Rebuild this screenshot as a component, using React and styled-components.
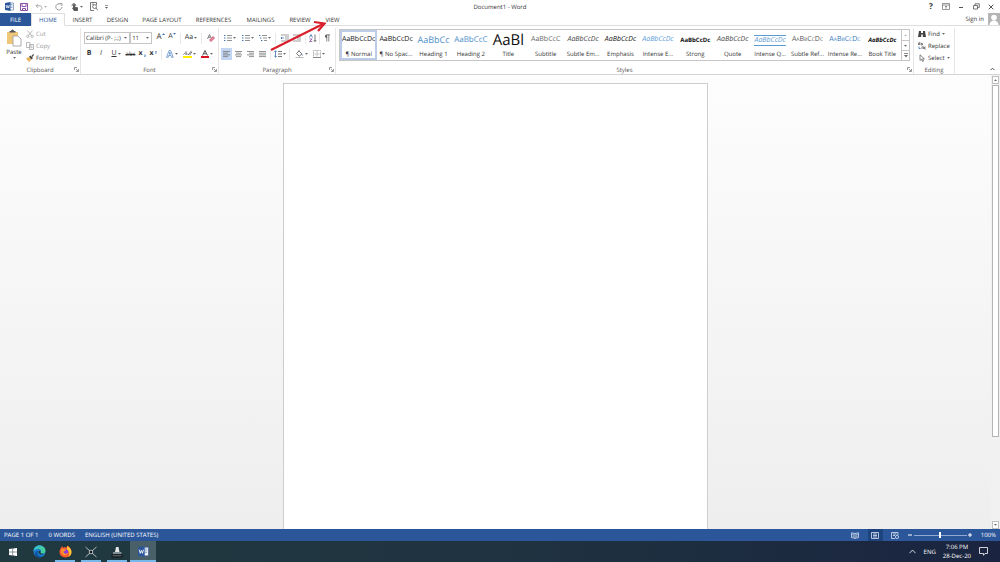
import React, { useState } from "react";
import styled, { createGlobalStyle, css } from "styled-components";

const GlobalStyle = createGlobalStyle`
  * {
    box-sizing: border-box;
  }
  body {
    margin: 0;
    font-family: "Open Sans", "Noto Sans", sans-serif;
    font-size: 6px;
    line-height: 8px;
    color: #333;
    background: #fff;
    text-rendering: geometricPrecision;
  }
  button, select, input {
    font: inherit;
    color: inherit;
    text-rendering: inherit;
    margin: 0;
    padding: 0;
    border: 0;
    border-radius: 0;
    background: transparent;
    appearance: none;
  }
  svg {
    display: block;
    flex: none;
  }
`;

const Window = styled.div`
  position: relative;
  display: flex;
  flex-direction: column;
  height: 100vh;
  overflow: hidden;
`;

/* title bar */
const TitleBar = styled.header`
  display: grid;
  grid-template-columns: 1fr auto 1fr;
  align-items: center;
  height: 13px;
  padding: 0 4px;
`;
const QuickAccess = styled.div`
  display: flex;
  align-items: center;
  gap: ${(p) => p.$gap || 0}px;
`;
const DocTitle = styled.h1`
  margin: 0;
  font-size: 6px;
  font-weight: 400;
`;
const WindowButtons = styled.div`
  display: flex;
  justify-content: flex-end;
  gap: 5px;
`;
const IconButton = styled.button`
  display: flex;
  align-items: center;
  justify-content: center;
  gap: 1px;
  flex: none;
  width: ${(p) => p.$w || 10}px;
  height: ${(p) => p.$h || 10}px;
  background: ${(p) => p.$on || "transparent"};
`;

/* tabs */
const TabRow = styled.nav`
  display: flex;
  height: 13px;
`;
const Tab = styled.button`
  width: ${(p) => p.$w}px;
  height: 13px;
  padding-top: 1px;
  white-space: nowrap;
  border-bottom: 1px solid #dedede;
  ${(p) =>
    p.$active &&
    css`
      padding-top: 0;
      color: #2b579a;
      border: 1px solid #dedede;
      border-bottom-color: #fff;
    `}
  ${(p) =>
    p.$file &&
    css`
      color: #fff;
      background: #2b579a;
      border-bottom-color: #2b579a;
    `}
`;
const SignIn = styled.div`
  display: flex;
  flex: 1;
  align-items: center;
  justify-content: flex-end;
  gap: 4px;
  border-bottom: 1px solid #dedede;
`;
const Link = styled.a`
  color: inherit;
  text-decoration: none;
`;

/* ribbon */
const Ribbon = styled.section`
  display: grid;
  grid-template-columns: 81px 138px 117px 1fr 41px 45px;
  height: 49px;
  border-bottom: 1px solid #d5d5d5;
`;
const Group = styled.div`
  display: flex;
  flex-direction: column;
  min-width: 0;
  margin: 2px 0 0;
  border-right: 1px solid #e6e6e6;
`;
const GroupBody = styled.div`
  display: flex;
  flex: 1;
  flex-direction: ${(p) => (p.$column ? "column" : "row")};
  gap: ${(p) => p.$gap || 0}px;
  min-width: 0;
  padding: ${(p) => p.$pad || "0"};
`;
const GroupFooter = styled.div`
  display: grid;
  grid-template-columns: 8px 1fr 8px;
  align-items: center;
  height: 9px;
  text-align: center;
  color: #555;
`;
const PasteButton = styled.button`
  display: flex;
  flex-direction: column;
  align-items: center;
  gap: 1px;
  width: 22px;
  height: 34px;
  padding-top: 1px;
`;
const Stack = styled.div`
  display: flex;
  flex-direction: column;
`;
const Command = styled.button`
  display: flex;
  align-items: center;
  gap: ${(p) => p.$gap || 2}px;
  height: 12px;
  white-space: nowrap;
  color: ${(p) => (p.disabled ? "#999" : "#333")};
`;
const Tools = styled.div`
  display: flex;
  align-items: center;
  height: 16px;
`;
const SelectBox = styled.label`
  display: flex;
  align-items: center;
  width: ${(p) => p.$w}px;
  height: 12px;
  margin-right: ${(p) => (p.$last ? 3 : 0)}px;
  padding: 0 2px 0 1px;
  border: 1px solid #c6c6c6;
  select {
    flex: 1;
    min-width: 0;
    height: 8px;
    outline: 0;
  }
`;
const Separator = styled.span`
  flex: none;
  width: 1px;
  height: 11px;
  margin: 0 2px;
  background: #e8e8e8;
`;
const Glyph = styled.span`
  font-size: ${(p) => p.$size || 7}px;
  font-weight: ${(p) => (p.$bold ? 700 : 400)};
  font-style: ${(p) => (p.$italic ? "italic" : "normal")};
  text-decoration: ${(p) => p.$line || "none"};
`;
const FontSizeButton = styled(IconButton)`
  align-items: flex-start;
  gap: 0;
`;

/* style gallery */
const Gallery = styled.div`
  display: flex;
  flex: 1;
  height: 32px;
  min-width: 0;
  border: 1px solid #c6c6c6;
`;
const GalleryItems = styled.div`
  display: grid;
  flex: 1;
  grid-template-columns: repeat(15, minmax(0, 1fr));
`;
const StyleItem = styled.button`
  display: flex;
  flex-direction: column;
  justify-content: flex-end;
  align-items: center;
  padding: 0 1px;
  white-space: nowrap;
  outline: ${(p) => (p.$active ? "2px solid #bccbe6" : "0")};
  outline-offset: -2px;
`;
const Sample = styled.span`
  display: flex;
  align-items: center;
  justify-content: center;
  min-width: 31px;
  height: ${(p) => (p.$boxed ? 11 : 18)}px;
  margin-bottom: ${(p) => (p.$boxed ? 4 : 1)}px;
  color: ${(p) => p.$color || "#111"};
  font-size: ${(p) => p.$size || 7}px;
  font-weight: ${(p) => (p.$bold ? 700 : 400)};
  font-style: ${(p) => (p.$italic ? "italic" : "normal")};
  font-variant: ${(p) => (p.$caps ? "small-caps" : "normal")};
  border: solid #5b9bd5;
  border-width: ${(p) => (p.$boxed ? "1px 0" : "0")};
`;
const StyleName = styled.span`
  height: 10px;
`;
const GalleryScroll = styled.div`
  display: grid;
  grid-template-rows: 1fr 1fr 1fr;
  width: 8px;
  border-left: 1px solid #c6c6c6;
  button {
    display: flex;
    align-items: center;
    justify-content: center;
  }
  button + button {
    border-top: 1px solid #c6c6c6;
  }
`;
const Collapse = styled.div`
  display: flex;
  align-items: flex-end;
  justify-content: flex-end;
  padding: 0 3px;
`;

/* document area */
const Workspace = styled.main`
  display: flex;
  flex: 1;
  min-height: 0;
  background: linear-gradient(#fdfdfd, #eeeeee);
`;
const Canvas = styled.div`
  display: flex;
  flex: 1;
  justify-content: center;
  padding-top: 8px;
`;
const Page = styled.article`
  width: 425px;
  background: #fff;
  border: 1px solid #cdcdcd;
  border-bottom: 0;
`;
const Scrollbar = styled.div`
  display: flex;
  flex-direction: column;
  width: 9px;
  padding: 1px 1px 0;
  gap: 1px;
  background: #f1f1f1;
`;
const ScrollButton = styled.button`
  display: flex;
  align-items: center;
  justify-content: center;
  height: 8px;
  background: #fff;
  border: 1px solid #c0c0c0;
`;
const Track = styled.div`
  flex: 1;
`;
const Thumb = styled.div`
  height: 81%;
  background: #fff;
  border: 1px solid #b4b4b4;
`;

/* status bar */
const StatusBar = styled.footer`
  display: flex;
  align-items: center;
  justify-content: space-between;
  height: 12px;
  padding: 0 4px;
  color: #fff;
  background: #2b579a;
`;
const StatusItems = styled.div`
  display: flex;
  align-items: center;
  gap: ${(p) => p.$gap}px;
`;
const ZoomSlider = styled.input`
  width: 53px;
  height: 12px;
  background: linear-gradient(#8fa9d0, #8fa9d0) center / 100% 1px no-repeat;
  &::-webkit-slider-thumb {
    appearance: none;
    width: 2px;
    height: 6px;
    background: #fff;
  }
`;

/* taskbar */
const Taskbar = styled.nav`
  display: flex;
  align-items: center;
  justify-content: space-between;
  height: 21px;
  color: #fff;
  background: linear-gradient(90deg, #20393f, #1f3340 50%, #1a2440);
`;
const TaskItems = styled.div`
  display: flex;
`;
const TaskButton = styled.button`
  display: flex;
  align-items: center;
  justify-content: center;
  width: 26px;
  height: 21px;
  background: ${(p) => (p.$active ? "#4a6069" : "transparent")};
  ${(p) =>
    p.$open &&
    css`
      background-image: linear-gradient(#76b9ed, #76b9ed);
      background-size: ${p.$active ? "100%" : "20px"} 2px;
      background-position: bottom;
      background-repeat: no-repeat;
    `}
`;
const Tray = styled.div`
  display: flex;
  align-items: center;
  gap: 7px;
  padding-right: 12px;
`;
const Clock = styled.time`
  text-align: center;
  line-height: 9px;
`;

const PointerArrow = styled.svg`
  position: absolute;
  left: 268px;
  top: 18px;
  pointer-events: none;
`;

const Icon = ({ w = 8, h = 8, children, ...rest }) => (
  <svg
    width={w}
    height={h}
    viewBox={`0 0 ${w} ${h}`}
    fill="none"
    stroke="#555"
    strokeWidth="0.8"
    {...rest}
  >
    {children}
  </svg>
);

const Caret = ({ up, color = "#666" }) => (
  <Icon w={3} h={2} stroke="none" fill={color}>
    <path d={up ? "M0 2L1.5 0.2L3 2z" : "M0 0L1.5 1.8L3 0z"} />
  </Icon>
);

const Launcher = () => (
  <IconButton $w={8} $h={8} aria-label="More options">
    <Icon w={5} h={5} strokeWidth="0.6">
      <path d="M0.5 3V0.5H3M2 2l2 2M4.5 2v2.5H2" />
    </Icon>
  </IconButton>
);

const WordIcon = ({ size = 9 }) => (
  <svg width={size} height={size} viewBox="0 0 18 18">
    <path d="M9 2h8v14H9z" fill="#fff" stroke="#2b579a" />
    <path d="M11 5h4M11 8h4M11 11h4" stroke="#2b579a" />
    <path d="M0 2L11 0V18L0 16z" fill="#2b579a" />
    <path d="M2 6l1.7 6L5.5 7l1.8 5L9 6" fill="none" stroke="#fff" strokeWidth="1.4" />
  </svg>
);

const Lines = ({ rows, color = "#777" }) => (
  <Icon stroke={color}>
    {rows.map(([a, b], i) => (
      <path key={i} d={`M${a} ${1.5 + i * 1.7}H${b}`} />
    ))}
  </Icon>
);

const ListIcon = ({ indent = 0 }) => (
  <Icon>
    <path d="M0 1.5h1.4" stroke="#3b6fb5" strokeWidth="1.2" />
    <path d={`M${indent} 4h1.4M${indent * 2} 6.5h1.4`} stroke="#3b6fb5" strokeWidth="1.2" />
    <path d={`M3 1.5h5M${3 + indent} 4H8M${3 + indent * 2} 6.5H8`} stroke="#777" />
  </Icon>
);

const IndentIcon = ({ right }) => (
  <Icon>
    <path d="M0 1h8M4 3h4M4 5h4M0 7h8" stroke="#777" strokeWidth="0.7" />
    <path d={right ? "M0 4h3M2 3l1 1-1 1" : "M0 4h3M1 3L0 4l1 1"} stroke="#3b6fb5" />
  </Icon>
);

const tabs = [
  { name: "FILE", w: 31 },
  { name: "HOME", w: 34 },
  { name: "INSERT", w: 35 },
  { name: "DESIGN", w: 35 },
  { name: "PAGE LAYOUT", w: 54 },
  { name: "REFERENCES", w: 49 },
  { name: "MAILINGS", w: 45 },
  { name: "REVIEW", w: 34 },
  { name: "VIEW", w: 31 },
];

const styles = [
  { name: "¶ Normal" },
  { name: "¶ No Spac..." },
  { name: "Heading 1", text: "AaBbCc", size: 9, color: "#4e8fcb" },
  { name: "Heading 2", text: "AaBbCcC", size: 8, color: "#4e8fcb" },
  { name: "Title", text: "AaBl", size: 15 },
  { name: "Subtitle", text: "AaBbCcC", color: "#666" },
  { name: "Subtle Em...", italic: true, color: "#444" },
  { name: "Emphasis", italic: true },
  { name: "Intense E...", italic: true, color: "#5b9bd5" },
  { name: "Strong", bold: true, size: 6 },
  { name: "Quote", italic: true, color: "#444" },
  { name: "Intense Q...", italic: true, boxed: true, color: "#5b9bd5" },
  { name: "Subtle Ref...", caps: true, color: "#555" },
  { name: "Intense Re...", caps: true, color: "#2f78c0" },
  { name: "Book Title", italic: true, bold: true, size: 6 },
];

const App = () => {
  const [tab, setTab] = useState("HOME");
  const [style, setStyle] = useState("¶ Normal");
  const [zoom, setZoom] = useState(100);

  return (
    <Window>
      <GlobalStyle />
      <TitleBar>
        <QuickAccess $gap={5}>
          <IconButton aria-label="Word">
            <WordIcon />
          </IconButton>
          <IconButton aria-label="Save">
            <Icon stroke="#8c4fa8" strokeWidth="1">
              <path d="M0.5 0.5h7v7h-7zM2 0.5V3.5H6V0.5M2.5 7.5V5.5H5.5V7.5" />
            </Icon>
          </IconButton>
          <IconButton $w={14} aria-label="Undo">
            <Icon stroke="#aaa" strokeWidth="1">
              <path d="M3 0.8L1 2.8L3 4.8M1 2.8H5C7.5 2.8 7.5 6.8 5 7" />
            </Icon>
            <Caret color="#aaa" />
          </IconButton>
          <IconButton $w={12} aria-label="Repeat">
            <Icon stroke="#999" strokeWidth="1">
              <path d="M5.5 1.2A3.1 3.1 0 1 0 7 4M4.5 0.5H7V3" />
            </Icon>
          </IconButton>
          <IconButton $w={14} aria-label="Touch mode">
            <Icon stroke="#555" strokeWidth="0.9">
              <path d="M1.2 3A1.8 1.8 0 1 1 4.6 3" />
              <path d="M2.5 1.6h1V4l3 0.7V7.5H3L1.6 5l0.9 0.2z" fill="#555" />
            </Icon>
            <Caret />
          </IconButton>
          <IconButton aria-label="Print preview">
            <Icon h={9}>
              <path d="M6.5 3V0.5H0.5v8H4" />
              <circle cx="4.6" cy="4.6" r="1.9" />
              <path d="M6 6l2 2.4M2 2.2h2" />
            </Icon>
          </IconButton>
          <IconButton $w={4} aria-label="Customize">
            <Icon w={3} h={4} strokeWidth="0.6">
              <path d="M0 0.5h3" />
              <path d="M0 2h3L1.5 3.8z" fill="#555" stroke="none" />
            </Icon>
          </IconButton>
        </QuickAccess>
        <DocTitle>Document1 - Word</DocTitle>
        <WindowButtons>
          <IconButton aria-label="Help">
            <Glyph $size={8} $bold>?</Glyph>
          </IconButton>
          <IconButton aria-label="Ribbon display">
            <Icon h={7}>
              <path d="M0.5 0.5h7v6h-7zM0.5 2h7M4 5.8V3M3 4l1-1 1 1" strokeWidth="0.6" />
            </Icon>
          </IconButton>
          <IconButton aria-label="Minimize">
            <Icon w={6} strokeWidth="1">
              <path d="M1 4.5h4" />
            </Icon>
          </IconButton>
          <IconButton aria-label="Restore">
            <Icon w={7} h={7}>
              <path d="M0.5 2.5h4v3.5h-4zM2 2.5V0.8H6.3V4.4H4.5" />
            </Icon>
          </IconButton>
          <IconButton aria-label="Close">
            <Icon w={6} h={6} strokeWidth="1">
              <path d="M0.7 0.7l4.6 4.6M5.3 0.7L0.7 5.3" />
            </Icon>
          </IconButton>
        </WindowButtons>
      </TitleBar>

      <TabRow>
        {tabs.map((t) => (
          <Tab
            key={t.name}
            $w={t.w}
            $file={t.name === "FILE"}
            $active={t.name === tab}
            onClick={() => setTab(t.name)}
          >
            {t.name}
          </Tab>
        ))}
        <SignIn>
          <Link href="#">Sign in</Link>
          <svg width="12" height="12" viewBox="0 0 12 12">
            <path d="M0 0h12v12H0z" fill="#b5b5b5" />
            <circle cx="6" cy="4.6" r="2.8" fill="#fff" />
            <path d="M1.5 12c0-6 9-6 9 0z" fill="#fff" />
          </svg>
        </SignIn>
      </TabRow>

      <Ribbon>
        <Group>
          <GroupBody $pad="0 0 0 3px" $gap={1}>
            <PasteButton>
              <svg width="16" height="18" viewBox="0 0 16 18">
                <path d="M1 3h11v12H1z" fill="#eec878" />
                <path d="M3.5 3.5V2H5a1.5 1.5 0 0 1 3 0h1.5v1.5z" fill="#555" />
                <path d="M7 7h5l3 3v7H7z" fill="#fff" stroke="#999" strokeWidth="0.8" />
              </svg>
              <span>Paste</span>
              <Caret />
            </PasteButton>
            <Stack>
              <Command disabled>
                <Icon stroke="#aaa">
                  <path d="M1.5 0.5L5.5 5.5M6.5 0.5L2.5 5.5" />
                  <circle cx="1.8" cy="6.3" r="1.2" />
                  <circle cx="6.2" cy="6.3" r="1.2" />
                </Icon>
                Cut
              </Command>
              <Command disabled>
                <Icon stroke="#aaa">
                  <path d="M0.5 0.5h3.5v5h-3.5zM3.5 2.5h4v5h-4zM4.5 4h2M4.5 5.7h2" />
                </Icon>
                Copy
              </Command>
              <Command>
                <Icon stroke="none">
                  <path d="M0 4.5L3 3l2.5 2.5L3 8z" fill="#e8b35a" />
                  <path d="M3 2.8L4.4 1.5 7 4 5.6 5.4zM5.5 2L7.3 0 8 0.8 6.5 3z" fill="#444" />
                </Icon>
                Format Painter
              </Command>
            </Stack>
          </GroupBody>
          <GroupFooter>
            <span />
            <span>Clipboard</span>
            <Launcher />
          </GroupFooter>
        </Group>

        <Group>
          <GroupBody $column $pad="2px 0 0 3px">
            <Tools>
              <SelectBox $w={49}>
                <select aria-label="Font">
                  <option>Calibri (P- ;.;)</option>
                </select>
                <Caret />
              </SelectBox>
              <SelectBox $w={23} $last>
                <select aria-label="Font size">
                  <option>11</option>
                </select>
                <Caret />
              </SelectBox>
              <FontSizeButton $w={11} aria-label="Grow font">
                <Glyph $size={8}>A</Glyph>
                <Caret up color="#3b6fb5" />
              </FontSizeButton>
              <FontSizeButton $w={12} aria-label="Shrink font">
                <Glyph>A</Glyph>
                <Caret color="#3b6fb5" />
              </FontSizeButton>
              <Separator />
              <IconButton $w={16} aria-label="Change case">
                <Glyph>Aa</Glyph>
                <Caret />
              </IconButton>
              <Separator />
              <IconButton $w={14} aria-label="Clear formatting">
                <Icon stroke="#666">
                  <path d="M0.5 5L2.5 0.5 4 4M1.2 3.3h2" />
                  <path d="M2.5 6L6 2.5 7.5 4 4 7.5z" fill="#e58a9c" stroke="#c0506a" />
                </Icon>
              </IconButton>
            </Tools>
            <Tools>
              <IconButton aria-label="Bold">
                <Glyph $bold>B</Glyph>
              </IconButton>
              <IconButton $w={14} aria-label="Italic">
                <Glyph $italic>I</Glyph>
              </IconButton>
              <IconButton $w={16} aria-label="Underline">
                <Glyph $line="underline">U</Glyph>
                <Caret />
              </IconButton>
              <IconButton $w={13} aria-label="Strikethrough">
                <Glyph $size={6} $line="line-through">abc</Glyph>
              </IconButton>
              <IconButton aria-label="Subscript">
                <Glyph $bold>x</Glyph>
                <Icon w={2} h={6} strokeWidth="0.6" stroke="#3b6fb5">
                  <path d="M0 4h1.6L0.2 5.7h1.6" />
                </Icon>
              </IconButton>
              <IconButton $w={12} aria-label="Superscript">
                <Glyph $bold>x</Glyph>
                <Icon w={2} h={6} strokeWidth="0.6" stroke="#3b6fb5">
                  <path d="M0 0.5h1.6L0.2 2.2h1.6" />
                </Icon>
              </IconButton>
              <Separator />
              <IconButton $w={16} aria-label="Text effects">
                <Icon stroke="#4a80c4">
                  <path d="M0.6 7.3L3 0.6h1.6L7.2 7.3H5.5L5 5.5H2.7L2.2 7.3zM3.2 4.2h1.3L3.8 2.2z" strokeWidth="0.7" />
                </Icon>
                <Caret />
              </IconButton>
              <IconButton $w={18} aria-label="Highlight colour">
                <Icon w={9}>
                  <path d="M0 6h9v2H0z" fill="#ffee00" stroke="none" />
                  <path d="M0.5 4.5L2 2.8M3 5V1.2M3 4h1.6M5 5l3.5-4.2M6.5 5.2L8.8 2" />
                </Icon>
                <Caret />
              </IconButton>
              <IconButton $w={18} aria-label="Font colour">
                <Icon>
                  <path d="M0 6h8v2H0z" fill="#d9121f" stroke="none" />
                  <path d="M1.5 5.5L4 0.5 6.5 5.5M2.5 3.8h3" strokeWidth="1" />
                </Icon>
                <Caret />
              </IconButton>
            </Tools>
          </GroupBody>
          <GroupFooter>
            <span />
            <span>Font</span>
            <Launcher />
          </GroupFooter>
        </Group>

        <Group>
          <GroupBody $column $pad="2px 0 0 2px">
            <Tools>
              <IconButton $w={18} aria-label="Bullets">
                <ListIcon />
                <Caret />
              </IconButton>
              <IconButton $w={18} aria-label="Numbering">
                <ListIcon />
                <Caret />
              </IconButton>
              <IconButton $w={16} aria-label="Multilevel list">
                <ListIcon indent={1} />
                <Caret />
              </IconButton>
              <Separator />
              <IconButton $w={13} aria-label="Decrease indent">
                <IndentIcon />
              </IconButton>
              <IconButton $w={12} aria-label="Increase indent">
                <IndentIcon right />
              </IconButton>
              <Separator />
              <IconButton $w={9} aria-label="Sort">
                <Icon>
                  <path d="M0.5 3.5L2 0.5l1.5 3" stroke="#3b6fb5" />
                  <path d="M0.5 5h2.6L0.5 7.5h2.8" stroke="#8c4fa8" />
                  <path d="M6 0.5v7M4.8 6L6 7.5 7.2 6" />
                </Icon>
              </IconButton>
              <Separator />
              <IconButton aria-label="Show marks">
                <Icon>
                  <path d="M3.8 7.5V0.8H7M5.8 7.5V0.8" strokeWidth="0.7" />
                  <path d="M3.8 0.5a1.7 1.7 0 0 0 0 3.6z" fill="#555" stroke="none" />
                </Icon>
              </IconButton>
            </Tools>
            <Tools>
              <IconButton $on="#c2d5f2" $w={11} $h={12} aria-label="Align left">
                <Lines rows={[[0, 7], [0, 5], [0, 7], [0, 5]]} />
              </IconButton>
              <IconButton $w={12} aria-label="Center">
                <Lines rows={[[1, 8], [2, 7], [1, 8], [2, 7]]} />
              </IconButton>
              <IconButton $w={12} aria-label="Align right">
                <Lines rows={[[1, 8], [3, 8], [1, 8], [3, 8]]} />
              </IconButton>
              <IconButton $w={12} aria-label="Justify">
                <Lines rows={[[1, 8], [1, 8], [1, 8], [1, 8]]} />
              </IconButton>
              <Separator />
              <IconButton $w={14} aria-label="Line spacing">
                <Icon>
                  <path d="M1.5 0.8v6.4M0.3 2L1.5 0.8 2.7 2M0.3 6L1.5 7.2 2.7 6" stroke="#3b6fb5" />
                  <path d="M4 1.5h4M4 4h4M4 6.5h4" />
                </Icon>
                <Caret />
              </IconButton>
              <Separator />
              <IconButton $w={18} aria-label="Shading">
                <Icon w={9}>
                  <path d="M1.5 3.5L4 1l3 3-2.8 2.2zM4 1V0.2" />
                  <path d="M7.2 4c1 1.2 1 2 0.3 2z" fill="#3b6fb5" stroke="none" />
                  <path d="M0.5 7.5h8" stroke="#aaa" />
                </Icon>
                <Caret />
              </IconButton>
              <IconButton $w={18} aria-label="Borders">
                <Icon stroke="#999">
                  <path d="M0.5 0.5h7v7h-7zM4 0.5v7M0.5 4h7" strokeDasharray="1 0.6" />
                  <path d="M0 7.5h8" stroke="#777" />
                </Icon>
                <Caret />
              </IconButton>
            </Tools>
          </GroupBody>
          <GroupFooter>
            <span />
            <span>Paragraph</span>
            <Launcher />
          </GroupFooter>
        </Group>

        <Group>
          <GroupBody $pad="1px 3px 0">
            <Gallery>
              <GalleryItems>
                {styles.map((s) => (
                  <StyleItem
                    key={s.name}
                    $active={s.name === style}
                    onClick={() => setStyle(s.name)}
                  >
                    <Sample
                      $size={s.size}
                      $color={s.color}
                      $italic={s.italic}
                      $bold={s.bold}
                      $caps={s.caps}
                      $boxed={s.boxed}
                    >
                      {s.text || "AaBbCcDc"}
                    </Sample>
                    <StyleName>{s.name}</StyleName>
                  </StyleItem>
                ))}
              </GalleryItems>
              <GalleryScroll>
                <button aria-label="Previous row">
                  <Caret up color="#bbb" />
                </button>
                <button aria-label="Next row">
                  <Caret />
                </button>
                <button aria-label="All styles">
                  <Icon w={4} h={5} strokeWidth="0.7">
                    <path d="M0 0.5h4" />
                    <path d="M0 2h4L2 4.4z" fill="#666" stroke="none" />
                  </Icon>
                </button>
              </GalleryScroll>
            </Gallery>
          </GroupBody>
          <GroupFooter>
            <span />
            <span>Styles</span>
            <Launcher />
          </GroupFooter>
        </Group>

        <Group>
          <GroupBody $column $pad="0 0 0 4px">
            <Command>
              <Icon stroke="none" fill="#444">
                <path d="M1 1h2v2H5V1h2l1 6H4.8V4.5H3.2V7H0z" />
              </Icon>
              <span>Find</span>
              <Caret />
            </Command>
            <Command>
              <Icon>
                <path d="M0.5 3V1l1-0.6V3M3 0.5V3h1.5V1.6H3M4 7V4.8h1.5V7M7.8 5H6.5v2h1.3" strokeWidth="0.7" />
                <path d="M1 4.5v2h1.6" stroke="#3b6fb5" />
              </Icon>
              <span>Replace</span>
            </Command>
            <Command>
              <Icon>
                <path d="M2 0.8v5.6l1.5-1.2L4.6 7.6 5.5 7 4.6 4.8H6.4z" strokeWidth="0.7" />
              </Icon>
              <span>Select</span>
              <Caret />
            </Command>
          </GroupBody>
          <GroupFooter>
            <span />
            <span>Editing</span>
          </GroupFooter>
        </Group>

        <Collapse>
          <IconButton aria-label="Collapse ribbon">
            <Icon w={5} h={4} strokeWidth="1">
              <path d="M0.5 3.2L2.5 1.2L4.5 3.2" />
            </Icon>
          </IconButton>
        </Collapse>
      </Ribbon>

      <Workspace>
        <Canvas>
          <Page />
        </Canvas>
        <Scrollbar>
          <ScrollButton aria-label="Scroll up">
            <Caret up />
          </ScrollButton>
          <Track>
            <Thumb />
          </Track>
          <ScrollButton aria-label="Scroll down">
            <Caret />
          </ScrollButton>
        </Scrollbar>
      </Workspace>

      <StatusBar>
        <StatusItems $gap={10}>
          <span>PAGE 1 OF 1</span>
          <span>0 WORDS</span>
          <span>ENGLISH (UNITED STATES)</span>
        </StatusItems>
        <StatusItems $gap={8}>
          <StatusItems $gap={5}>
            <IconButton $w={15} $h={12} aria-label="Read mode">
              <Icon h={7} stroke="#dbe5f3">
                <path d="M0.5 0.8L4 1.5 7.5 0.8V5.5L4 6.3 0.5 5.5zM4 1.5v4.8M1.5 2.5l1.5 0.3M1.5 4l1.5 0.3M5 2.8l1.5-0.3M5 4.3L6.5 4" />
              </Icon>
            </IconButton>
            <IconButton $w={15} $h={12} $on="#1e4480" aria-label="Print layout">
              <Icon h={7} stroke="#dbe5f3">
                <path d="M0.5 0.5h7v6h-7zM2 2h4M2 3.5h4M2 5h4" />
              </Icon>
            </IconButton>
            <IconButton $w={15} $h={12} aria-label="Web layout">
              <Icon h={7} stroke="#dbe5f3">
                <path d="M7 3V0.5H0.5v6H4M2 2h3.5M2 3.5h2" />
                <circle cx="6" cy="5" r="1.6" />
              </Icon>
            </IconButton>
            <StatusItems $gap={1}>
              <IconButton $w={5} aria-label="Zoom out">
                <Icon w={4} h={4} stroke="#fff" strokeWidth="1">
                  <path d="M0 2h4" />
                </Icon>
              </IconButton>
              <ZoomSlider
                type="range"
                min="0"
                max="200"
                aria-label="Zoom"
                value={zoom}
                onChange={(e) => setZoom(Number(e.target.value))}
              />
              <IconButton $w={5} aria-label="Zoom in">
                <Icon w={4} h={4} stroke="#fff" strokeWidth="1">
                  <path d="M0 2h4M2 0v4" />
                </Icon>
              </IconButton>
            </StatusItems>
          </StatusItems>
          <span>{zoom}%</span>
        </StatusItems>
      </StatusBar>

      <Taskbar>
        <TaskItems>
          <TaskButton aria-label="Start">
            <Icon stroke="none" fill="#fff">
              <path d="M0 1.1L3.6 0.6V3.8H0zM4.1 0.5L8 0V3.8H4.1zM0 4.3H3.6V7.4L0 6.9zM4.1 4.3H8V8L4.1 7.5z" />
            </Icon>
          </TaskButton>
          <TaskButton aria-label="Edge">
            <svg width="13" height="13" viewBox="0 0 24 24">
              <circle cx="12" cy="12" r="11" fill="#1b7fd0" />
              <path d="M1 11C2 4 7 1 12 1c7 0 11 5 11 9 0 4-3 6-6 6-3 0-4-1-3-2 3-4-1-7-4-7-4 0-8 2-9 4z" fill="#45cfa0" />
              <path d="M1 11C2 4 7 1 12 1c3 0 5 1 7 3-6-2-14 1-18 7z" fill="#35b8d8" />
              <path d="M9 11c-3 5 1 11 8 10-4 3-11 2-13-3-1-4 1-7 5-7z" fill="#0f4f9e" />
              <path d="M10 13c0-3 4-3 4 0 -1 2 1 4 6 3-3 3-10 2-10-3z" fill="#20393f" />
            </svg>
          </TaskButton>
          <TaskButton $open aria-label="Firefox">
            <svg width="13" height="13" viewBox="0 0 24 24">
              <path d="M4 5l1-3 3 3c2-1 4-1 6 0l2-4c5 3 7 8 7 12 0 6-5 10-11 10S1 19 1 13c0-3 1-6 3-8z" fill="#ff5a2c" />
              <path d="M15 2c5 3 8 7 8 11 0 5-3 8-6 9 3-4 3-10-2-13z" fill="#ffc933" />
              <circle cx="12" cy="13" r="5" fill="#8a3be0" />
              <path d="M4 8c3-2 6-1 9 1-2 1-3 3-5 3 1 5 7 5 9 2-1 6-11 7-13 0z" fill="#ff9426" />
            </svg>
          </TaskButton>
          <TaskButton $open aria-label="Utility">
            <Icon w={12} h={12} stroke="#d8dcdd">
              <path d="M0.5 1L5 5M11.5 1L7 5M0.5 11L5 7M11.5 11L7 7" />
              <circle cx="6" cy="6" r="1.8" fill="#111" />
            </Icon>
          </TaskButton>
          <TaskButton $open aria-label="Disk tool">
            <Icon w={12} h={12} stroke="none" fill="#e4e7e8">
              <path d="M4 6L5 1h2.5L8.500 6zM2 6.500h8.500v1H2z" />
              <path d="M0.500 8.500h11v3H0.500z" fill="#0c1417" />
              <path d="M1.500 9.500h9v0.700h-9z" fill="#9aa3a6" />
            </Icon>
          </TaskButton>
          <TaskButton $open $active aria-label="Word">
            <WordIcon size={11} />
          </TaskButton>
        </TaskItems>
        <Tray>
          <IconButton $w={8} aria-label="Hidden icons">
            <Icon w={7} h={5} stroke="#fff">
              <path d="M0.5 4.2L3.5 1L6.5 4.2" />
            </Icon>
          </IconButton>
          <span>ENG</span>
          <Clock>
            7:06 PM
            <br />
            28-Dec-20
          </Clock>
          <IconButton aria-label="Notifications">
            <Icon w={9} h={9} stroke="#fff">
              <path d="M0.5 0.5h8v6H6L4.5 8.3V6.5h-4z" />
            </Icon>
          </IconButton>
        </Tray>
      </Taskbar>

      <PointerArrow width="60" height="36" viewBox="0 0 60 36" fill="none" stroke="#d8202c">
        <path d="M3 32L55 6" strokeWidth="2.200" />
        <path d="M46 4L56.500 5.500L50 13" strokeWidth="2.200" />
      </PointerArrow>
    </Window>
  );
};

export default App;
